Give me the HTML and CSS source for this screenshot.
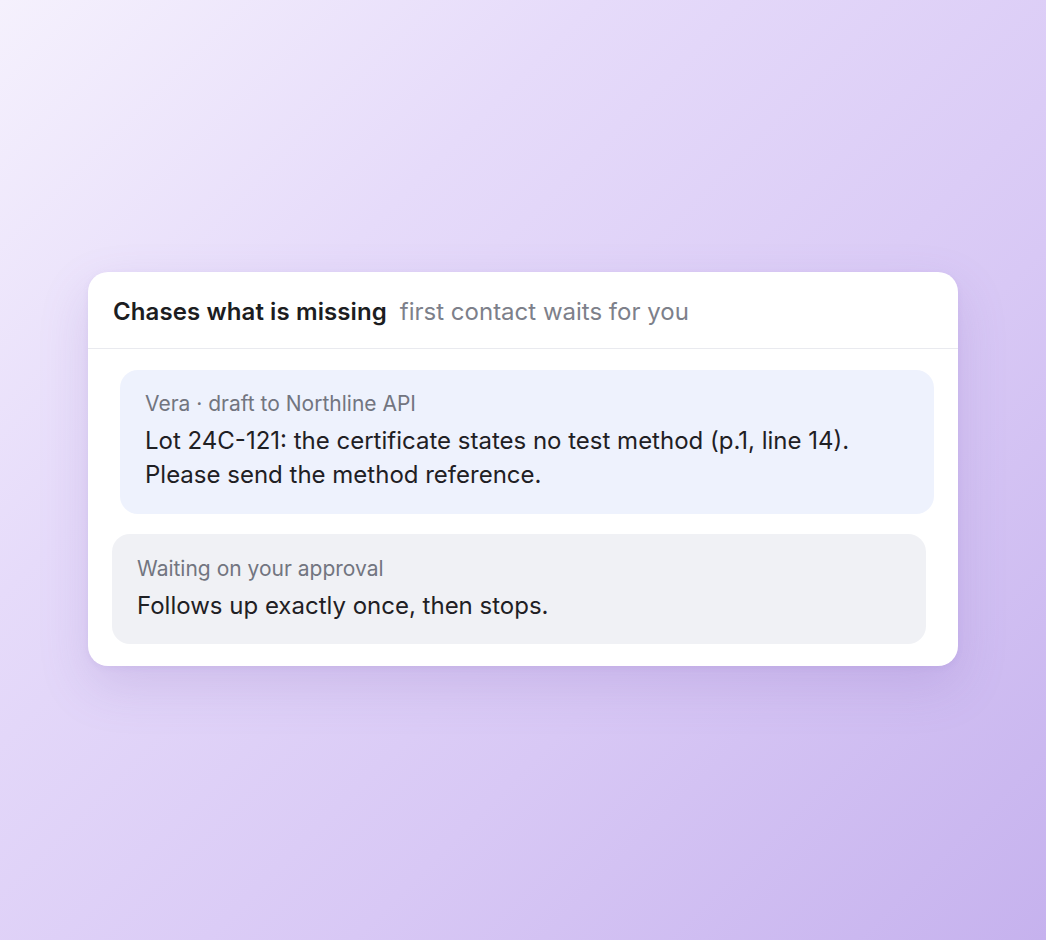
FILE: index.html
```html
<!DOCTYPE html>
<html lang="en">
<head>
<meta charset="utf-8">
<title>Chases what is missing</title>
<link rel="stylesheet" href="styles.css">
</head>
<body>
<main class="stage">
  <section class="card">
    <header class="card-head">
      <h1 class="title">Chases what is missing</h1>
      <span class="subtitle">first contact waits for you</span>
    </header>
    <div class="card-body">
      <div class="bubble bubble-draft">
        <div class="label">Vera · draft to Northline API</div>
        <p class="text">Lot 24C-121: the certificate states no test method (p.1, line 14). Please send the method reference.</p>
      </div>
      <div class="bubble bubble-status">
        <div class="label">Waiting on your approval</div>
        <p class="text">Follows up exactly once, then stops.</p>
      </div>
    </div>
  </section>
</main>
</body>
</html>
```

FILE: styles.css
```css
* { box-sizing: border-box; }
html, body { margin: 0; padding: 0; }
body {
  width: 1046px;
  height: 940px;
  font-family: Inter, "Noto Sans", sans-serif;
  background: linear-gradient(135deg, #f5f1fd 0%, #e6dbfa 30%, #d8c8f5 65%, #c6b2ee 100%);
  overflow: hidden;
}
.stage {
  padding: 272px 88px 0 88px;
}
.card {
  width: 870px;
  background: #ffffff;
  border-radius: 20px;
  box-shadow: 0 20px 50px rgba(120, 90, 180, 0.18), 0 2px 6px rgba(120, 90, 180, 0.08);
  overflow: hidden;
}
.card-head {
  display: flex;
  align-items: center;
  gap: 13px;
  height: 77px;
  padding: 3px 25px 0;
  border-bottom: 1px solid #e9eaef;
}
.title {
  margin: 0;
  font-size: 24px;
  line-height: 32px;
  font-weight: 600;
  color: #1c1d21;
  letter-spacing: 0.1px;
}
.subtitle {
  font-size: 24px;
  line-height: 32px;
  color: #7d808a;
}
.card-body {
  display: flex;
  flex-direction: column;
  gap: 20px;
  padding: 21px 0 22px;
}
.bubble {
  border-radius: 18px;
  padding: 20px 25px 22px;
}
.bubble-draft {
  margin: 0 24px 0 32px;
  background: #eef2fd;
}
.bubble-status {
  margin: 0 32px 0 24px;
  background: #f0f1f5;
  padding-top: 21px;
  padding-bottom: 21px;
}
.label {
  font-size: 21px;
  line-height: 28px;
  color: #727580;
  margin-bottom: 6px;
}
.text {
  margin: 0;
  font-size: 24px;
  line-height: 34px;
  color: #1f2024;
}
```
